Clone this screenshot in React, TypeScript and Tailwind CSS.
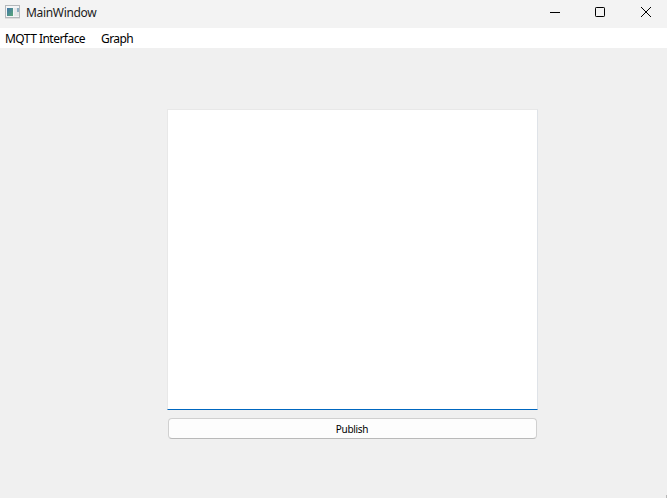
import React from "react";

function AppIcon() {
  return (
    <svg width="15" height="14" viewBox="0 0 15 14" className="shrink-0">
      <defs>
        <linearGradient id="pane" x1="0" y1="0" x2="1" y2="1">
          <stop offset="0" stopColor="#3f74a8" />
          <stop offset="1" stopColor="#5aa878" />
        </linearGradient>
      </defs>
      <rect x="0.5" y="0.5" width="14" height="12" fill="#f4f5f6" stroke="#b4b8bb" />
      <rect x="2" y="3" width="6" height="8" fill="url(#pane)" />
      <rect x="9" y="3" width="3" height="8" fill="#e6e8ea" />
      <rect x="12" y="3" width="2" height="4" fill="#8fb0c4" />
      <rect x="12" y="7" width="2" height="4" fill="#e1e7e6" />
      <rect x="0" y="13" width="15" height="1" fill="#dddddd" />
    </svg>
  );
}

function TitleBar() {
  return (
    <header className="flex h-7 shrink-0 items-start bg-[#f3f3f3]">
      <div className="flex h-[26px] flex-1 items-center gap-1.5 pl-[5px]">
        <div className="-mt-0.5 flex">
          <AppIcon />
        </div>
        <span className="text-[12px] leading-4 tracking-[-0.32px] text-[#1b1b1b]">MainWindow</span>
      </div>
      <div className="flex text-black">
        <button aria-label="Minimize" className="flex h-6 w-[45px] items-center justify-center">
          <svg width="10" height="10" viewBox="0 0 10 10"><path d="M0 5.5H10" stroke="currentColor" /></svg>
        </button>
        <button aria-label="Maximize" className="flex h-6 w-[45px] items-center justify-center">
          <svg width="10" height="10" viewBox="0 0 10 10" fill="none"><rect x="0.5" y="0.5" width="9" height="9" rx="0.7" stroke="currentColor" /></svg>
        </button>
        <button aria-label="Close" className="flex h-6 w-[45px] items-center justify-center pl-0.5">
          <svg width="10" height="10" viewBox="0 0 10 10"><path d="M0 0L10 10M10 0L0 10" stroke="currentColor" /></svg>
        </button>
      </div>
    </header>
  );
}

export default function App() {
  return (
    <div className="flex h-[498px] w-[667px] flex-col overflow-hidden bg-[#f0f0f0] font-['Noto_Sans','Open_Sans',sans-serif]">
      <TitleBar />
      <nav className="flex h-5 shrink-0 items-center gap-4 bg-white pl-[5px] text-[12px] leading-5 text-black">
        <span className="w-20 whitespace-nowrap pt-0.5 tracking-[-0.53px]">MQTT Interface</span>
        <span className="pt-0.5 tracking-[-0.55px]">Graph</span>
      </nav>
      <main className="flex flex-1 flex-col pl-[167px] pt-[61px]">
        <textarea
          aria-label="Message"
          className="block h-[301px] w-[371px] resize-none border border-b border-[#e8e8e8] border-r-[#dfe3e8] border-b-[#0067c0] bg-white outline-none"
        />
        <button className="ml-px mt-2 h-[21px] w-[369px] rounded-[4px] border border-[#d0d0d0] border-b-[#b9b9b9] bg-[#fdfdfd] pr-[1px] pt-0.5 text-[10px] leading-[17px] tracking-[-0.3px] text-black">
          Publish
        </button>
        <div className="mt-auto h-[3px] w-px self-end bg-[#b8b8b8]" />
      </main>
    </div>
  );
}
